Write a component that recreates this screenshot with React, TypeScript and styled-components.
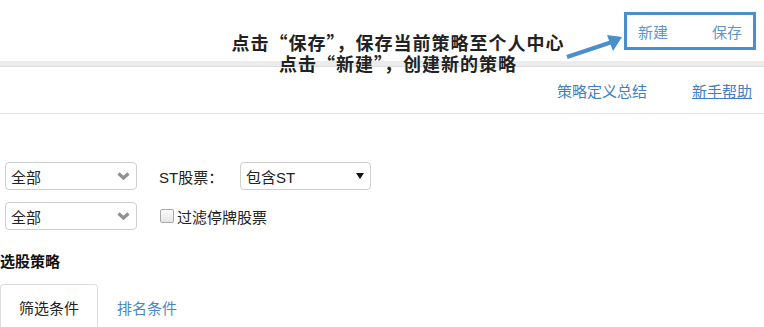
import styled, { createGlobalStyle } from 'styled-components';

const GlobalStyle = createGlobalStyle`
  body {
    margin: 0;
    background: #fff;
    font-family: "Liberation Sans", "Noto Sans CJK SC", sans-serif;
    color: #333;
  }
`;

const Page = styled.div`
  position: relative;
  width: 764px;
  height: 327px;
  overflow: hidden;
`;

const Header = styled.div`
  height: 61px;
  display: flex;
  justify-content: flex-end;
  align-items: flex-start;
  padding: 12px 8px 0 0;
  box-sizing: border-box;
`;

const ActionBox = styled.div`
  width: 132px;
  height: 38px;
  box-sizing: border-box;
  border: 3px solid #4a8fcb;
  display: flex;
  align-items: center;
  justify-content: space-between;
  padding: 0 11px 0 11px;
`;

const ActionLink = styled.span`
  font-size: 15px;
  color: #5f95cf;
  cursor: pointer;
`;

const Band = styled.div`
  height: 5px;
  background: #ececec;
  border-bottom: 1px solid #dedede;
`;

const LinkRow = styled.div`
  height: 46px;
  display: flex;
  align-items: center;
  justify-content: flex-end;
  gap: 45px;
  padding-right: 12px;
  border-bottom: 1px solid #e5e5e5;
`;

const TopLink = styled.a<{ $underline?: boolean }>`
  font-size: 15px;
  color: #3f80c2;
  text-decoration: ${(p) => (p.$underline ? 'underline' : 'none')};
  cursor: pointer;
`;

const Filters = styled.div`
  display: grid;
  grid-template-columns: 132px auto;
  column-gap: 22px;
  row-gap: 12px;
  margin: 48px 0 0 5px;
  align-items: center;
`;

const SelectBox = styled.div<{ $w: number }>`
  width: ${(p) => p.$w}px;
  height: 28px;
  box-sizing: border-box;
  border: 1px solid #cfcfcf;
  border-radius: 4px;
  display: flex;
  align-items: center;
  justify-content: space-between;
  padding: 0 6px 0 5px;
  font-size: 15px;
  color: #222;
  background: #fff;
`;

const Inline = styled.div`
  display: flex;
  align-items: center;
`;

const Label = styled.span`
  font-size: 15px;
  color: #222;
  width: 81px;
`;

const Check = styled.span`
  width: 12px;
  height: 12px;
  border: 1px solid #a9a9a9;
  border-radius: 2px;
  background: linear-gradient(#fbfbfb, #e6e6e6);
  margin: 0 3px 0 1px;
`;

const CheckText = styled.span`
  font-size: 15px;
  color: #222;
`;

const SectionTitle = styled.div`
  font-size: 15px;
  font-weight: bold;
  color: #111;
  margin-top: 21px;
  line-height: 22px;
`;

const Tabs = styled.div`
  display: flex;
  margin-top: 11px;
  border-bottom: 1px solid #ddd;
`;

const Tab = styled.div<{ $active?: boolean }>`
  height: 46px;
  box-sizing: border-box;
  padding: 0 18px;
  display: flex;
  align-items: center;
  font-size: 15px;
  color: ${(p) => (p.$active ? '#222' : '#4a86c5')};
  border: 1px solid ${(p) => (p.$active ? '#ddd' : 'transparent')};
  border-bottom-color: ${(p) => (p.$active ? '#fff' : 'transparent')};
  border-radius: 4px 4px 0 0;
  margin-bottom: -1px;
`;

const Note = styled.div`
  position: absolute;
  left: 196px;
  width: 404px;
  top: 32px;
  text-align: center;
  font-family: "Noto Sans CJK SC", sans-serif;
  font-weight: bold;
  font-size: 18px;
  letter-spacing: 1px;
  line-height: 21px;
  color: #222;
`;

const Arrow = styled.svg`
  position: absolute;
  left: 560px;
  top: 30px;
`;

const Chevron = () => (
  <svg width="13" height="8" viewBox="0 0 13 8">
    <polyline points="1.5,1.5 6.5,6 11.5,1.5" fill="none" stroke="#909090" strokeWidth="3.2" />
  </svg>
);

const Caret = () => (
  <svg width="8" height="6" viewBox="0 0 8 6">
    <polygon points="0,0 8,0 4,6" fill="#111" />
  </svg>
);

export default function App() {
  return (
    <Page>
      <GlobalStyle />
      <Header>
        <ActionBox>
          <ActionLink>新建</ActionLink>
          <ActionLink>保存</ActionLink>
        </ActionBox>
      </Header>
      <Band />
      <LinkRow>
        <TopLink>策略定义总结</TopLink>
        <TopLink $underline>新手帮助</TopLink>
      </LinkRow>

      <Filters>
        <SelectBox $w={132}>
          全部
          <Chevron />
        </SelectBox>
        <Inline>
          <Label>ST股票：</Label>
          <SelectBox $w={131}>
            包含ST
            <Caret />
          </SelectBox>
        </Inline>
        <SelectBox $w={132}>
          全部
          <Chevron />
        </SelectBox>
        <Inline>
          <Check />
          <CheckText>过滤停牌股票</CheckText>
        </Inline>
      </Filters>

      <SectionTitle>选股策略</SectionTitle>
      <Tabs>
        <Tab $active>筛选条件</Tab>
        <Tab>排名条件</Tab>
      </Tabs>

      <Note>
        点击“保存”，保存当前策略至个人中心
        <br />
        点击“新建”，创建新的策略
      </Note>
      <Arrow width="70" height="35" viewBox="0 0 70 35">
        <line x1="7" y1="27" x2="52" y2="12" stroke="#4a8fcb" strokeWidth="4" />
        <polygon points="62,7 47,5 53,21" fill="#4a8fcb" />
      </Arrow>
    </Page>
  );
}
